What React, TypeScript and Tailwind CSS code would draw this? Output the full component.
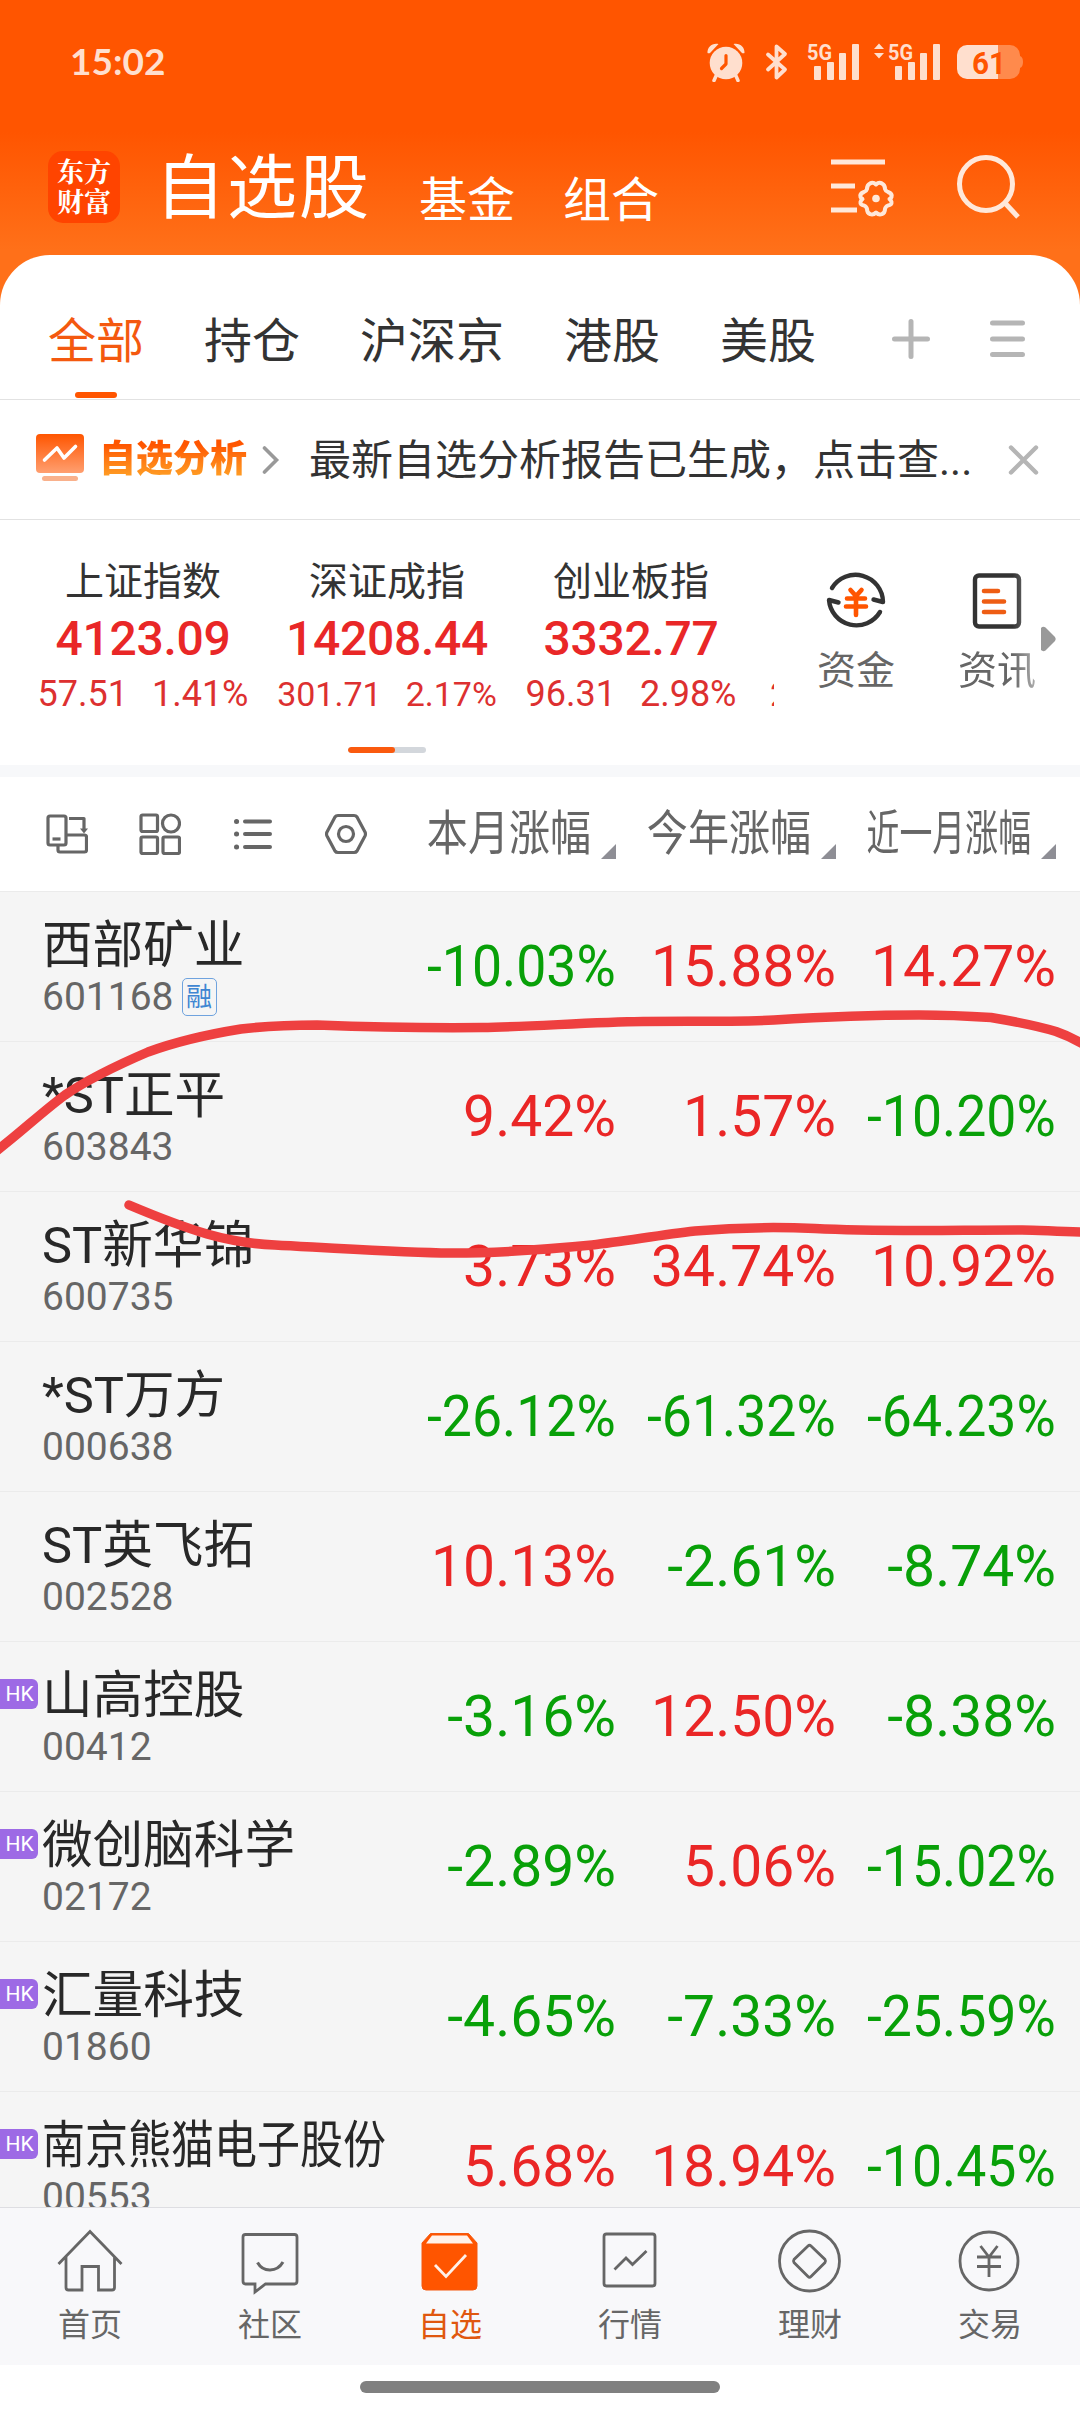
import React from "react";
import clsx from "clsx";

interface IStock {
    name: string;
    code: string;
    hk?: boolean;
    margin?: boolean;
    changes: string[];
}

const stocks: IStock[] = [
    { name: "西部矿业", code: "601168", margin: true, changes: ["-10.03%", "15.88%", "14.27%"] },
    { name: "*ST正平", code: "603843", changes: ["9.42%", "1.57%", "-10.20%"] },
    { name: "ST新华锦", code: "600735", changes: ["3.73%", "34.74%", "10.92%"] },
    { name: "*ST万方", code: "000638", changes: ["-26.12%", "-61.32%", "-64.23%"] },
    { name: "ST英飞拓", code: "002528", changes: ["10.13%", "-2.61%", "-8.74%"] },
    { name: "山高控股", code: "00412", hk: true, changes: ["-3.16%", "12.50%", "-8.38%"] },
    { name: "微创脑科学", code: "02172", hk: true, changes: ["-2.89%", "5.06%", "-15.02%"] },
    { name: "汇量科技", code: "01860", hk: true, changes: ["-4.65%", "-7.33%", "-25.59%"] },
    { name: "南京熊猫电子股份", code: "00553", hk: true, changes: ["5.68%", "18.94%", "-10.45%"] },
];

const indices = [
    { name: "上证指数", value: "4123.09", diff: "57.51", rate: "1.41%" },
    { name: "深证成指", value: "14208.44", diff: "301.71", rate: "2.17%", small: true },
    { name: "创业板指", value: "3332.77", diff: "96.31", rate: "2.98%" },
];

const groups = ["全部", "持仓", "沪深京", "港股", "美股"];
const columns = ["本月涨幅", "今年涨幅", "近一月涨幅"];

const Signal = () => (
    <svg className="overflow-visible" width="52" height="38" viewBox="0 0 52 38" fill="#ffdfce">
        <text x="-1" y="17" fontSize="22.5" fontWeight="700" textLength="25" lengthAdjust="spacingAndGlyphs">
            5G
        </text>
        <rect x="6" y="23" width="7" height="14" rx="1" />
        <rect x="19" y="19" width="7" height="18" rx="1" />
        <rect x="31" y="10" width="7" height="27" rx="1" />
        <rect x="44" y="1" width="7" height="36" rx="1" />
    </svg>
);

const StatusBar = () => (
    <div className="flex h-[124px] items-center justify-between pl-[70px] pr-[57px]">
        <span className="mb-[3px] font-['Lato',sans-serif] text-[37px] font-bold leading-none text-[#ffdfce]">
            15:02
        </span>

        <div className="flex items-center">
            <svg width="38" height="40" viewBox="0 0 38 40" fill="#ffdfce">
                <circle cx="19" cy="21" r="16.3" />
                <path d="M0.5 11C0 5 5.5 0.5 11.5 2L3.5 10.5C2.5 11.5 1.5 11.5 0.5 11ZM37.5 11C38 5 32.5 0.5 26.5 2L34.5 10.5C35.5 11.5 36.5 11.5 37.5 11Z" />
                <path d="M9 34L7 38.5M29 34L31 38.5" stroke="#ffdfce" strokeWidth="3.5" strokeLinecap="round" />
                <path d="M19 13.5V22L14.5 26.5" fill="none" stroke="#ff5500" strokeWidth="3.2" strokeLinecap="round" strokeLinejoin="round" />
            </svg>
            <svg className="ml-[20px]" width="24" height="38" viewBox="0 0 24 38">
                <path
                    d="M3 11.5L20 26.5L11.5 34.5V3.5L20 11L3 26.5"
                    fill="none"
                    stroke="#ffdfce"
                    strokeWidth="3.8"
                    strokeLinecap="round"
                    strokeLinejoin="round"
                />
            </svg>
            <div className="ml-[19px] flex">
                <Signal />
            </div>
            <svg className="mb-[22px] ml-[14px]" width="10" height="16" viewBox="0 0 10 16" fill="#ffdfce">
                <path d="M5 0.5L10 6H0ZM5 15.5L10 10H0Z" />
            </svg>
            <div className="ml-[5px] flex">
                <Signal />
            </div>
            <svg className="ml-[16px] overflow-visible" width="66" height="34" viewBox="0 0 66 34">
                <path d="M41 0H53a10 10 0 0 1 10 10V11q3 1 3 6t-3 6V24a10 10 0 0 1-10 10H41Z" fill="#ff8a4c" />
                <path d="M41 0H10A10 10 0 0 0 0 10V24A10 10 0 0 0 10 34H41Z" fill="#ffdfce" />
                <text x="15" y="28.5" fontSize="31" fontWeight="700" fill="#ff5500" textLength="34" lengthAdjust="spacingAndGlyphs">
                    61
                </text>
            </svg>
        </div>
    </div>
);

const Header = () => (
    <div className="flex h-[131px] items-end pb-[30px] pl-[48px] text-white">
        <div className="mb-[2px] flex h-[72px] w-[72px] flex-col items-center justify-center rounded-[15px] bg-[#ff4400] pb-[3px] font-['Noto_Serif_CJK_SC','Noto_Sans_CJK_SC',serif] text-[27px] font-bold leading-[30px]">
            <span>东方</span>
            <span>财富</span>
        </div>
        <span className="ml-[35px] text-[70px] leading-[72px] tracking-[2px]">自选股</span>
        <span className="ml-[48px] text-[48px] leading-[48px]">基金</span>
        <span className="ml-[48px] text-[48px] leading-[48px]">组合</span>

        <svg className="mb-[2px] ml-[172px]" width="64" height="68" viewBox="0 0 64 68" fill="none" stroke="#ffe8da" strokeWidth="5">
            <path d="M0 7H54M0 31H24M0 55H26" />
            <path
                d="M45 29.5Q48 26.500 51 28.500Q54 30 54 34Q54.500 36 57 37Q61.500 38.500 60.500 42Q60 43.500 58.500 44Q60 45 60.500 47Q61 50 57 50.500Q54.500 51.500 54 54Q54 58 51 59Q48 60.500 45 57.500Q42 60.500 39 59Q36 58 36 54Q35.500 51.500 33 50.500Q29 50 29.500 47Q30 45 31.500 44Q30 43.500 29.500 42Q28.500 38.500 33 37Q35.500 36 36 34Q36 30 39 28.500Q42 26.500 45 29.500Z"
                strokeWidth="4"
                strokeLinejoin="round"
            />
            <circle cx="45" cy="43.5" r="3.8" fill="#ffe8da" stroke="none" />
        </svg>
        <svg className="ml-[61px]" width="66" height="70" viewBox="0 0 66 70" fill="none" stroke="#ffe8da" strokeWidth="5">
            <circle cx="30" cy="29" r="26.5" />
            <path d="M49 48L62 62" />
        </svg>
    </div>
);

const Groups = () => (
    <div className="flex h-[145px] border-b border-[#e2e2e2] pl-[48px] pt-[60px]">
        <div className="flex gap-[60px] text-[48px] leading-[54px] text-[#333]">
            {groups.map((group, index) => (
                <div key={group} className={clsx("flex flex-col items-center", index === 0 && "text-[#f4590f]")}>
                    <span>{group}</span>
                    {index === 0 && <span className="mt-[23px] h-[6px] w-[42px] rounded-full bg-[#ff5500]" />}
                </div>
            ))}
        </div>
        <svg className="ml-[75px] mt-[3px]" width="40" height="42" viewBox="0 0 40 42" stroke="#b5b5b5" strokeWidth="5" strokeLinecap="round">
            <path d="M20 3.5V38.5M3.5 21H36.5" />
        </svg>
        <svg className="ml-[58px] mt-[3px]" width="38" height="42" viewBox="0 0 38 42" stroke="#b5b5b5" strokeWidth="5" strokeLinecap="round">
            <path d="M3.5 5H33.5M3.5 21H33.5M3.5 36.5H33.5" />
        </svg>
    </div>
);

const Notice = () => (
    <div className="flex h-[120px] items-center border-b border-[#e2e2e2] pl-[36px]">
        <svg className="mb-[3px]" width="48" height="48" viewBox="0 0 48 48" fill="none">
            <defs>
                <linearGradient id="screen" x1="0" y1="0" x2="0" y2="1">
                    <stop offset="0" stopColor="#ff5500" />
                    <stop offset="1" stopColor="#ff9f70" />
                </linearGradient>
            </defs>
            <rect width="48" height="39" rx="4" fill="url(#screen)" />
            <rect x="6" y="42" width="36" height="5" rx="2.5" fill="#f9b18c" />
            <path d="M8.5 26L21 14L28 24L39.5 12.5" stroke="#fff" strokeWidth="3.6" strokeLinecap="round" strokeLinejoin="round" />
        </svg>
        <span className="ml-[15px] bg-gradient-to-b from-[#ff5500] from-20% to-[#ff9a22] to-80% bg-clip-text text-[37px] font-black leading-[50px] text-transparent">
            自选分析
        </span>
        <svg className="ml-[15px]" width="18" height="30" viewBox="0 0 18 30" fill="none" stroke="#999" strokeWidth="3.6" strokeLinecap="round">
            <path d="M2.5 3L14.5 15L2.5 27" />
        </svg>
        <span className="ml-[29px] mt-[3px] whitespace-nowrap text-[42px] leading-[50px] text-[#333]">
            最新自选分析报告已生成，点击查...
        </span>
        <svg className="ml-[35px] mt-px" width="34" height="32" viewBox="0 0 34 32" stroke="#b5b5b5" strokeWidth="4.4" strokeLinecap="round">
            <path d="M4 3.5L29 28.5M29 3.5L4 28.5" />
        </svg>
    </div>
);

const Indices = () => (
    <div className="flex h-[245px] flex-col">
        <div className="flex h-[227px]">
            <div className="flex w-[774px] overflow-hidden pl-[21px] pt-[37px]">
                {indices.map(({ name, value, diff, rate, small }) => (
                    <div key={diff} className="flex w-[244px] shrink-0 flex-col items-center text-[#e92727]">
                        <span className="h-[50px] text-[39px] leading-[50px] text-[#333]">{name}</span>
                        <span className="h-[60px] text-[48px] font-medium leading-[64px] tracking-[-0.3px]">{value}</span>
                        <div
                            className={clsx(
                                "flex h-[54px] items-baseline justify-center gap-[24px] whitespace-nowrap leading-[54px] text-[#dd3030]",
                                small ? "text-[34px]" : "text-[36px]"
                            )}
                        >
                            <span>{diff}</span>
                            <span>{rate}</span>
                        </div>
                    </div>
                ))}
                {/* the next index peeks in at the edge of the strip */}
                <span className="ml-[17px] mt-[110px] text-[34px] leading-[54px] text-[#dd3030]">2</span>
            </div>
            <div className="flex pt-[49px] text-[39px] leading-[50px] text-[#666]">
                <div className="ml-[43px] flex w-[78px] flex-col items-center">
                    <svg width="62" height="64" viewBox="0 0 62 64" fill="none" strokeWidth="4.4">
                        <g stroke="#333" strokeLinecap="round" strokeLinejoin="round">
                            <path d="M7 19A27.5 27.5 0 0 1 58 33L48.5 30.5" />
                            <path d="M55 43A27.5 27.5 0 0 1 4 31L13.5 33.5" />
                        </g>
                        <path
                            d="M25.5 21L31 27L36.5 21M22 29.5H40M21 37.5H41M31 27V46"
                            stroke="#ff5500"
                            strokeWidth="4.6"
                            strokeLinecap="round"
                        />
                    </svg>
                    <span className="mt-[13px]">资金</span>
                </div>
                <div className="ml-[63px] flex w-[78px] flex-col items-center [mask-image:linear-gradient(to_right,#000_70%,#0008)]">
                    <svg width="62" height="64" viewBox="0 0 62 64" fill="none">
                        <rect x="9" y="6.5" width="44" height="51" rx="4" stroke="#333" strokeWidth="4.4" />
                        <path d="M18 22H32M18 32.5H38M18 43H38" stroke="#ee5d14" strokeWidth="4.6" strokeLinecap="round" />
                    </svg>
                    <span className="mt-[13px]">资讯</span>
                </div>
                <svg className="ml-[5px] mt-[57px]" width="16" height="26" viewBox="0 0 16 26" fill="#999">
                    <path d="M0 2Q2 0 4.5 1.5L14 11Q15.5 13 14 15L4.5 24.5Q2 26 0 24Z" />
                </svg>
            </div>
        </div>
        <div className="ml-[348px] h-[6px] w-[78px] overflow-hidden rounded-full bg-[#d3d7dc]">
            <div className="h-full w-[47px] rounded-full bg-[#fa5a0f]" />
        </div>
    </div>
);

const TableHead = () => (
    <div className="flex h-[114px] items-center justify-between pl-[46px] pr-[24px]">
        <div className="flex items-center">
            <svg width="42" height="42" viewBox="0 0 42 42" fill="none" stroke="#666" strokeWidth="3.2" strokeLinejoin="round">
                <rect x="2" y="3" width="18" height="29" rx="2" />
                <path d="M6.5 26H14.5" />
                <path d="M23 5.5H38V16" />
                <path d="M34 15.5H42L38 20.5Z" fill="#666" stroke="none" />
                <path d="M20 22H38.5Q40.5 22 40.5 24V37Q40.5 39 38.5 39H14Q12 39 12 37V33" />
            </svg>
            <svg className="ml-[51px]" width="42" height="42" viewBox="0 0 42 42" fill="none" stroke="#666" strokeWidth="3.2">
                <rect x="2" y="2" width="16.5" height="16.5" rx="1.5" />
                <circle cx="32" cy="10.5" r="8.5" />
                <rect x="2" y="24" width="16.5" height="16.5" rx="1.5" />
                <rect x="24" y="24" width="16.5" height="16.5" rx="1.5" />
            </svg>
            <svg className="ml-[53px]" width="38" height="42" viewBox="0 0 38 42" stroke="#666" strokeWidth="4" strokeLinecap="round">
                <path d="M2.5 8.5h.1M2.5 21h.1M2.5 34h.1" strokeWidth="5" />
                <path d="M11 8.5H36M11 21H36M11 34H36" />
            </svg>
            <svg className="ml-[53px]" width="42" height="42" viewBox="0 0 42 42" fill="none" stroke="#666" strokeWidth="3.2" strokeLinejoin="round">
                <path d="M13 2.5H29Q31 2.5 32 4L40 19Q41 21 40 23L32 38Q31 39.5 29 39.5H13Q11 39.5 10 38L2 23Q1 21 2 19L10 4Q11 2.5 13 2.5Z" />
                <circle cx="21" cy="21" r="7.5" />
            </svg>
        </div>
        <div className="flex text-[48px] leading-[60px] text-[#666]">
            {columns.map((column) => (
                <div key={column} className="flex w-[220px] items-end justify-end">
                    <span
                        className={clsx(
                            "shrink-0 origin-right whitespace-nowrap",
                            column.length > 4 ? "scale-x-[0.685]" : "scale-x-[0.855]"
                        )}
                    >
                        {column}
                    </span>
                    <svg className="mb-[5px] ml-[10px] shrink-0" width="15" height="15" viewBox="0 0 15 15">
                        <path d="M15 0V15H0Z" fill="#8e8e95" />
                    </svg>
                </div>
            ))}
        </div>
    </div>
);

const StockRow = ({ name, code, hk, margin, changes }: IStock) => (
    <div className="flex h-[150px] shrink-0 border-t border-[#ebebeb] pr-[24px]">
        <div className="w-[42px] shrink-0 pt-[37px]">
            {hk && (
                <div className="flex h-[30px] w-[38px] items-center justify-center rounded-r-[6px] bg-[#9d6ae5] pl-px text-[21px] leading-none text-white">
                    HK
                </div>
            )}
        </div>
        <div className="flex w-[354px] flex-col items-start pt-[24px]">
            <span
                className={clsx(
                    "origin-left whitespace-nowrap text-[50.6px] leading-[60px] text-[#282828]",
                    name.length > 7 && "scale-x-[0.85]"
                )}
            >
                {name}
            </span>
            <div className="flex items-center text-[39px] leading-[42px] text-[#666]">
                <span>{code}</span>
                {margin && (
                    <span className="ml-[8px] flex h-[38px] w-[35px] items-center justify-center rounded-[5px] border-[1.5px] border-[#6fa3de] text-[26px] text-[#3f86d2]">
                        融
                    </span>
                )}
            </div>
        </div>
        <div className="flex items-center text-[57px] leading-[60px]">
            {changes.map((change, index) => (
                <div key={index} className="flex w-[220px] justify-end">
                    <span
                        className={clsx(
                            "origin-right",
                            change.startsWith("-") ? "text-[#08a008]" : "text-[#ea2626]",
                            change.length > 6 && "scale-x-[0.94]"
                        )}
                    >
                        {change}
                    </span>
                </div>
            ))}
        </div>
    </div>
);

const tabs = [
    {
        label: "首页",
        icon: (
            <path d="M3.5 37L35 4.5L66.5 37M11 30V60.5Q11 63 13.5 63H27V39.5H43.5V63H57Q59.5 63 59.5 60.5V30" />
        ),
    },
    {
        label: "社区",
        icon: (
            <>
                <path d="M10.5 7.5H59.5Q62 7.5 62 10V54Q62 57 59.5 57H30.5L20 65V57H10.5Q8 57 8 54V10Q8 7.5 10.5 7.5Z" />
                <path d="M22.5 35.5C28 45.5 42 45.5 48 35" strokeWidth="3" />
            </>
        ),
    },
    {
        label: "自选",
        icon: (
            <g transform="translate(-1 0)">
                <path d="M8 16L16.5 6.5H54.5L63 16V59Q63 63 59 63H12Q8 63 8 59Z" fill="#ff5500" stroke="#f4590f" strokeWidth="1" />
                <path d="M18 8.5H53L59 16.5H12Z" fill="#fff2ea" stroke="none" />
                <path d="M21 38L32 49.5L52 28" stroke="#fff0e8" />
            </g>
        ),
    },
    {
        label: "行情",
        icon: (
            <>
                <rect x="9" y="7" width="51" height="52" rx="2.5" />
                <path d="M19.5 42.5L31 31L37.5 37.5L51.5 24" />
            </>
        ),
    },
    {
        label: "理财",
        icon: (
            <>
                <circle cx="34.5" cy="34" r="30" />
                <path d="M33 19Q34.5 17.5 36 19L50 32.5Q51 34 50 35.5L36 49.5Q34.5 51 33 49.5L19 35.5Q18 34 19 32.5Z" />
            </>
        ),
    },
    {
        label: "交易",
        icon: (
            <>
                <circle cx="34" cy="34" r="29" />
                <path d="M25.5 19L34 30L42.5 19M22 30H46M22 39.5H46M34 30V50" />
            </>
        ),
    },
];

const TabBar = () => (
    <div className="flex h-[158px] border-t border-[#dedee2] bg-[#f8f8fa]">
        {tabs.map(({ label, icon }) => (
            <div
                key={label}
                className={clsx(
                    "flex w-[180px] flex-col items-center pt-[19px] text-[32px] leading-[40px]",
                    label === "自选" ? "text-[#e0570f]" : "text-[#666]"
                )}
            >
                <svg width="70" height="70" viewBox="0 0 70 70" fill="none" stroke="#666" strokeWidth="2.8">
                    {icon}
                </svg>
                <span className="mt-[8px]">{label}</span>
            </div>
        ))}
    </div>
);

// freehand marker strokes drawn over the list
const Scribble = () => (
    <svg
        className="pointer-events-none absolute left-0 top-[991px]"
        width="1080"
        height="300"
        viewBox="0 991 1080 300"
        fill="none"
        stroke="#ee4040"
        strokeWidth="9.5"
        strokeLinecap="round"
        strokeLinejoin="round"
    >
        <path d="M-5 1152C20 1133 42 1112 65 1095C90 1078 120 1064 148 1052C178 1041 210 1034 241 1029C266 1026 292 1025 317 1025C370 1027 425 1028 482 1027.5C530 1027 590 1022 643 1021.5C690 1021 730 1022 774 1020C822 1017 870 1015 919 1015C945 1015 968 1016 991 1017.5C1012 1021 1034 1025 1056 1031.5Q1072 1037 1086 1046" />
        <path d="M129 1205C155 1216 180 1226 207 1234C228 1240 250 1244 275 1245C330 1248 390 1252 441 1253C492 1254 540 1250 592 1245C626 1241 660 1235 695 1231C740 1227 780 1227 815 1228.5C880 1232 950 1230 1022 1230C1040 1230 1060 1232 1086 1232" />
    </svg>
);

const App = () => {
    return (
        <div className="relative flex h-[2412px] w-[1080px] flex-col overflow-hidden bg-white font-['Roboto','Noto_Sans_CJK_SC',sans-serif]">
            <div className="bg-[linear-gradient(to_bottom,#ff5500_0px,#ff5500_132px,#ff7019_250px)]">
                <StatusBar />
                <Header />
                <div className="rounded-t-[50px] bg-white">
                    <Groups />
                </div>
            </div>
            <Notice />
            <Indices />
            <div className="h-[12px] bg-[#f7f8fa]" />
            <TableHead />
            <div className="flex h-[1316px] flex-col overflow-hidden bg-[#f5f5f5]">
                {stocks.map((stock) => (
                    <StockRow key={stock.code} {...stock} />
                ))}
            </div>
            <TabBar />
            <div className="flex justify-center pt-[16px]">
                <div className="h-[12px] w-[360px] rounded-full bg-[#808080]" />
            </div>
            <Scribble />
        </div>
    );
};

export default App;
